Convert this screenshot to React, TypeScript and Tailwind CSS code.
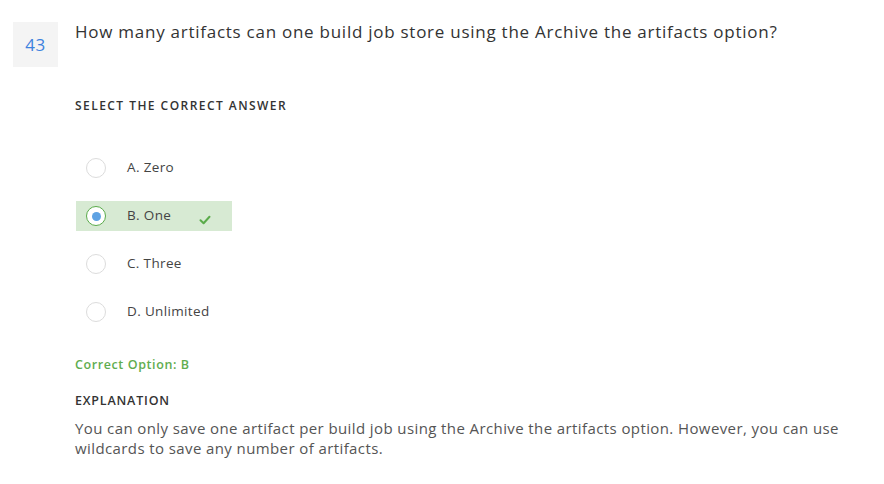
import React from "react";

const options = [
  { label: "A. Zero", selected: false },
  { label: "B. One", selected: true },
  { label: "C. Three", selected: false },
  { label: "D. Unlimited", selected: false },
];

export default function App() {
  return (
    <div className="w-[884px] h-[484px] bg-white" style={{ fontFamily: '"Open Sans", "Liberation Sans", sans-serif' }}>
      <div className="flex pl-[13px] pt-[22px]">
        <div className="w-[45px] h-[45px] bg-[#f4f4f4] flex items-center justify-center text-[17px] tracking-[0.5px] text-[#3d82de] shrink-0">
          43
        </div>
        <div className="ml-[17px] flex flex-col">
          <div className="text-[17px] leading-[22px] text-[#333] tracking-[0.74px] -mt-[1px]">
            How many artifacts can one build job store using the Archive the artifacts option?
          </div>
          <div className="mt-[56px] text-[12px] font-semibold tracking-[1.45px] text-[#333] leading-[14px]">
            SELECT THE CORRECT ANSWER
          </div>
          <div className="mt-[40px] flex flex-col gap-[18px]">
            {options.map((o) => (
              <div
                key={o.label}
                className={
                  o.selected
                    ? "flex items-center h-[30px] w-[156px] pl-[10px] ml-[1px] bg-[#d7ead3]"
                    : "flex items-center h-[30px] w-[156px] pl-[10px] ml-[1px]"
                }
              >
                {o.selected ? (
                  <div className="w-[20px] h-[20px] rounded-full border border-[#5aab4a] bg-white flex items-center justify-center shrink-0">
                    <div className="w-[9px] h-[9px] rounded-full bg-[#5ea2e3]" />
                  </div>
                ) : (
                  <div className="w-[20px] h-[20px] rounded-full border border-[#dcdcdc] bg-white shrink-0" />
                )}
                <span className="ml-[21px] text-[13.5px] tracking-[0.35px] text-[#444] -mt-[1px]">{o.label}</span>
                {o.selected && (
                  <svg className="ml-[28px] mt-[8px]" width="12" height="10" viewBox="0 0 12 10">
                    <path d="M1.5 5.2 L4.6 8.2 L10.5 1.8" fill="none" stroke="#5aab4a" strokeWidth="2" strokeLinecap="round" strokeLinejoin="round" />
                  </svg>
                )}
              </div>
            ))}
          </div>
          <div className="mt-[30px] text-[12.5px] font-semibold tracking-[0.6px] text-[#5fad4f] leading-[16px]">
            Correct Option: B
          </div>
          <div className="mt-[20px] text-[12.5px] font-semibold text-[#333] leading-[16px] tracking-[0.8px]">
            EXPLANATION
          </div>
          <div className="mt-[9px] text-[15px] leading-[20px] text-[#555] tracking-[0.4px] w-[790px]">
            You can only save one artifact per build job using the Archive the artifacts option. However, you can use wildcards to save any number of artifacts.
          </div>
        </div>
      </div>
    </div>
  );
}
